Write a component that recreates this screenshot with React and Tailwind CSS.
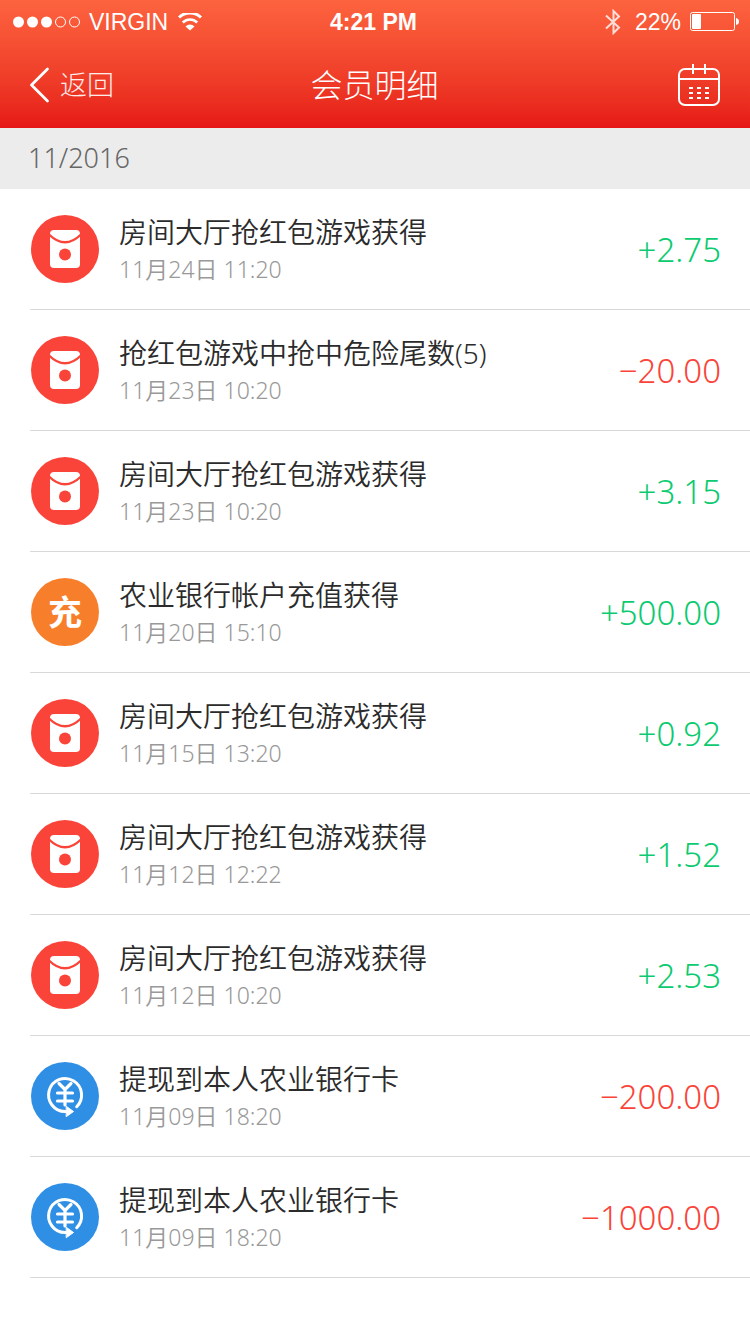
const transactions = [
  { id: 1, type: "packet", title: "房间大厅抢红包游戏获得", time: "11月24日 11:20", amount: "+2.75" },
  { id: 2, type: "packet", title: "抢红包游戏中抢中危险尾数(5)", time: "11月23日 10:20", amount: "−20.00" },
  { id: 3, type: "packet", title: "房间大厅抢红包游戏获得", time: "11月23日 10:20", amount: "+3.15" },
  { id: 4, type: "recharge", title: "农业银行帐户充值获得", time: "11月20日 15:10", amount: "+500.00" },
  { id: 5, type: "packet", title: "房间大厅抢红包游戏获得", time: "11月15日 13:20", amount: "+0.92" },
  { id: 6, type: "packet", title: "房间大厅抢红包游戏获得", time: "11月12日 12:22", amount: "+1.52" },
  { id: 7, type: "packet", title: "房间大厅抢红包游戏获得", time: "11月12日 10:20", amount: "+2.53" },
  { id: 8, type: "withdraw", title: "提现到本人农业银行卡", time: "11月09日 18:20", amount: "−200.00" },
  { id: 9, type: "withdraw", title: "提现到本人农业银行卡", time: "11月09日 18:20", amount: "−1000.00" },
];

function StatusBar() {
  return (
    <div className="grid h-11 grid-cols-[1fr_auto_1fr] items-center pl-3 pr-[11px] font-['Liberation_Sans',sans-serif] text-[23px] leading-7">
      <div className="flex items-center">
        <svg className="mr-2 h-3 w-[69px]" viewBox="0 0 69 12" fill="#fff" aria-hidden="true">
          <circle cx="6.5" cy="6" r="5.5" />
          <circle cx="20.5" cy="6" r="5.5" />
          <circle cx="34.5" cy="6" r="5.5" />
          <circle cx="48.5" cy="6" r="5" fill="none" stroke="#fff" />
          <circle cx="62.5" cy="6" r="5" fill="none" stroke="#fff" />
        </svg>
        <span>VIRGIN</span>
        <svg className="ml-2.5 h-[18px] w-6" viewBox="0 0 24 18" fill="none" stroke="#fff" aria-hidden="true">
          <path d="M1 4.5 A15.5 15.5 0 0 1 23 4.5" strokeWidth="3" />
          <path d="M4.8 9.5 A10.2 10.2 0 0 1 19.2 9.5" strokeWidth="2.6" />
          <path d="M12 17.5 L7.5 13.5 A6 6 0 0 1 16.5 13.5 Z" fill="#fff" stroke="none" />
        </svg>
      </div>
      <span className="pr-1 font-bold">4:21 PM</span>
      <div className="flex items-center justify-end">
        <svg className="mr-3.5 h-[26px] w-4" viewBox="0 0 16 26" fill="none" stroke="#fff" strokeWidth="2" opacity="0.8" aria-hidden="true">
          <path d="M1 6.5 L14 18.5 L8.5 24 V2 L14 7.5 L1 19.5" />
        </svg>
        <span>22%</span>
        <svg className="ml-2 h-5 w-[50px]" viewBox="0 0 50 20" aria-hidden="true">
          <rect x="1.5" y="0.5" width="44" height="18" rx="2" fill="none" stroke="#fff" />
          <rect x="3" y="2" width="9" height="15" rx="1" fill="#fff" />
          <path d="M47 6 Q50 6.5 50 9.5 Q50 12.5 47 13 Z" fill="#fff" />
        </svg>
      </div>
    </div>
  );
}

function NavBar() {
  return (
    <div className="grid h-[84px] grid-cols-[1fr_auto_1fr] items-center pb-0.5 pl-7 pr-[29px]">
      <button type="button" className="flex items-center gap-2 justify-self-start text-[27px] leading-10 text-white/90">
        <svg className="h-9 w-6" viewBox="0 0 24 36" fill="none" stroke="#fff" strokeWidth="2.8" strokeLinecap="round" strokeLinejoin="round" aria-hidden="true">
          <path d="M19.5 2 L3.5 18 L19.5 34" />
        </svg>
        返回
      </button>
      <h1 className="text-[32px] leading-10">会员明细</h1>
      <button type="button" aria-label="日历" className="justify-self-end">
        <svg className="block h-[44px] w-[44px]" viewBox="0 0 44 44" fill="none" stroke="#fff" strokeWidth="2" aria-hidden="true">
          <rect x="2" y="6" width="40" height="36" rx="6" />
          <path d="M2 16 H42 M16 1 V11 M28 1 V11" />
          <path d="M12 25 H32 M12 30 H32 M12 35 H32" strokeDasharray="4" />
        </svg>
      </button>
    </div>
  );
}

function TypeIcon({ type }) {
  if (type === "recharge") {
    return (
      <div className="flex size-[68px] shrink-0 items-center justify-center rounded-full bg-[#f77f2b] text-[34px] leading-10 font-bold text-white">
        充
      </div>
    );
  }
  if (type === "withdraw") {
    return (
      <svg className="size-[68px] shrink-0" viewBox="0 0 68 68" fill="none" stroke="#fff" strokeLinecap="round" aria-hidden="true">
        <circle cx="34" cy="34" r="34" fill="#2f8fe5" stroke="none" />
        <path d="M45.7 44.7 A16.5 16.5 0 1 0 34 49.5 H37" strokeWidth="3" />
        <path d="M35.5 44.5 L42.5 49.5 L35.5 54.5 Z" fill="#fff" strokeWidth="1" strokeLinejoin="round" />
        <path d="M28 21.5 L34 27.5 L40 21.5 M26.5 31 H41.5 M26.5 39 H41.5 M34 27.5 V43" strokeWidth="3.2" />
      </svg>
    );
  }
  return (
    <svg className="size-[68px] shrink-0" viewBox="0 0 68 68" aria-hidden="true">
      <circle cx="34" cy="34" r="34" fill="#fa4439" />
      <rect x="19" y="15" width="30" height="38" rx="4" fill="#fff" />
      <path d="M18 19.5 Q34 35 50 19.5" fill="none" stroke="#fa4439" strokeWidth="2.4" />
      <circle cx="34" cy="39.5" r="6" fill="#fa4439" />
    </svg>
  );
}

function TransactionRow({ item }) {
  const income = item.amount.startsWith("+");
  return (
    <li className="ml-[30px] flex h-[121px] items-center border-b border-[#d9d9d9] pl-px pr-[29px]">
      <TypeIcon type={item.type} />
      <div className="ml-5 min-w-0 flex-1 font-[350]">
        <p className="truncate text-[28px] leading-10 text-[#2b2b2b]">{item.title}</p>
        <p className="text-[23px] leading-[34px] text-[#999]">{item.time}</p>
      </div>
      <span className={income ? "pt-0.5 text-[33px] leading-10 text-[#0bca6f]" : "pt-0.5 text-[33px] leading-10 text-[#fa4439]"}>
        {item.amount}
      </span>
    </li>
  );
}

export default function App() {
  return (
    <div className="min-h-screen bg-white font-['Noto_Sans','Noto_Sans_CJK_SC',sans-serif] font-light">
      <header className="bg-linear-to-b from-[#fd633f] to-[#e61717] text-white">
        <StatusBar />
        <NavBar />
      </header>
      <main>
        <h2 className="h-[61px] bg-[#ececec] pl-7 text-[27px] leading-[60px] text-[#666]">11/2016</h2>
        <ul>
          {transactions.map((item) => (
            <TransactionRow key={item.id} item={item} />
          ))}
        </ul>
      </main>
    </div>
  );
}
